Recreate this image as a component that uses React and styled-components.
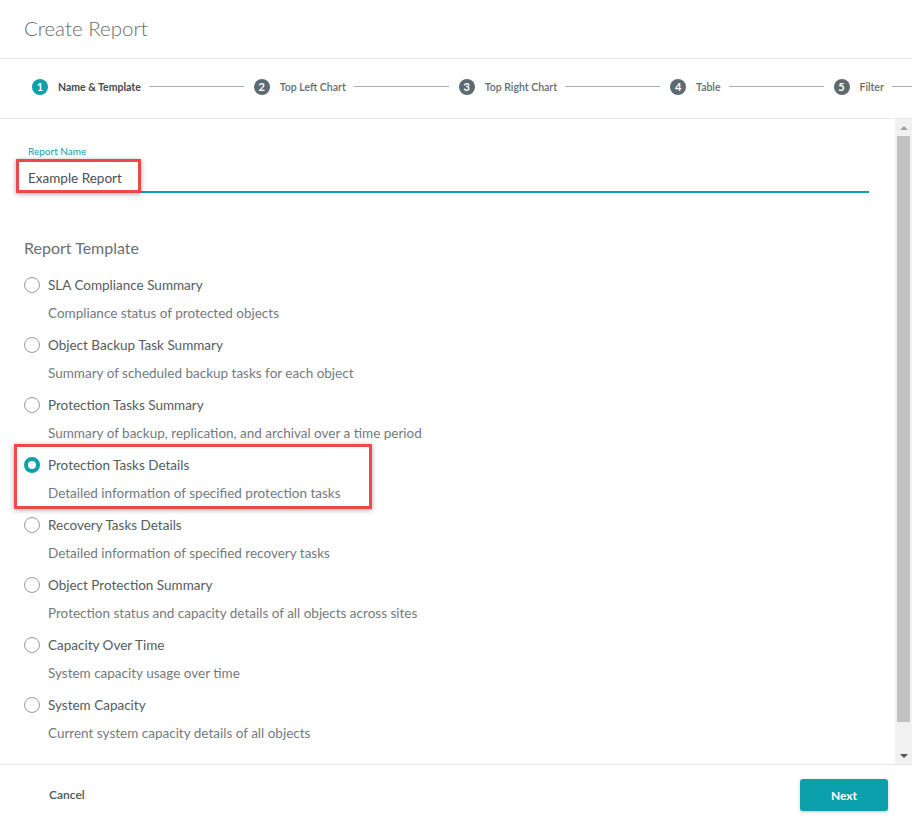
import styled, { createGlobalStyle } from "styled-components";

const GlobalStyle = createGlobalStyle`
  html, body {
    margin: 0;
    padding: 0;
    background: #ffffff;
    font-family: Lato, "Open Sans", sans-serif;
  }
  * {
    box-sizing: border-box;
  }
`;

const teal = "#0ba0ab";

const Dialog = styled.div`
  width: 912px;
  height: 825px;
  display: flex;
  flex-direction: column;
  background: #fff;
  overflow: hidden;
`;

const Header = styled.div`
  height: 59px;
  padding: 0 24px 2px;
  display: flex;
  align-items: center;
  border-bottom: 1px solid #e8e8e8;
  font-size: 20.5px;
  font-weight: 300;
  color: #6b6b6b;
`;

const Stepper = styled.div`
  height: 60px;
  flex-shrink: 0;
  padding: 0 0 4px 32px;
  display: flex;
  align-items: center;
  border-bottom: 1px solid #e8e8e8;
  overflow: hidden;
  white-space: nowrap;
`;

const Step = styled.div`
  display: flex;
  align-items: center;
  flex-shrink: 0;
`;

const StepNum = styled.span`
  width: 16px;
  height: 16px;
  border-radius: 50%;
  background: ${(p) => (p.$active ? teal : "#5d6a6f")};
  color: #fff;
  font-size: 11px;
  font-weight: 700;
  display: flex;
  align-items: center;
  justify-content: center;
`;

const StepLabel = styled.span`
  margin-left: 10px;
  font-size: 10.5px;
  font-weight: ${(p) => (p.$active ? 700 : 600)};
  color: ${(p) => (p.$active ? "#3f4a50" : "#626c70")};
`;

const StepLine = styled.span`
  width: 95px;
  height: 1px;
  background: #a8adb0;
  margin: 0 10px 0 8px;
`;

const Body = styled.div`
  flex: 1;
  min-height: 0;
  display: flex;
`;

const Content = styled.div`
  flex: 1;
  min-width: 0;
  overflow: hidden;
  padding: 26px 26px 0 24px;
`;

const ScrollBar = styled.div`
  width: 17px;
  flex-shrink: 0;
  background: #f1f1f1;
  display: flex;
  flex-direction: column;
  align-items: center;
`;

const ScrollArrow = styled.div`
  height: 17px;
  width: 100%;
  display: flex;
  align-items: center;
  justify-content: center;
  &::before {
    content: "";
    border-left: 4px solid transparent;
    border-right: 4px solid transparent;
    ${(p) => (p.$down ? "border-top: 4px solid #505050;" : "border-bottom: 4px solid #a3a3a3;")}
  }
`;

const ScrollTrack = styled.div`
  flex: 1;
  width: 100%;
  padding: 0 2px 25px;
  display: flex;
`;

const ScrollThumb = styled.div`
  flex: 1;
  background: #c1c1c1;
`;

const FieldLabel = styled.div`
  font-size: 10px;
  color: ${teal};
  margin-left: 4px;
`;

const InputWrap = styled.div`
  position: relative;
  margin-top: 8px;
  border-bottom: 2px solid ${teal};
  padding: 2px 0 2px 4px;
`;

const TextInput = styled.div`
  font-size: 13.5px;
  color: #4a4f52;
  line-height: 22px;
`;

const Highlight = styled.div`
  position: absolute;
  border: 3px solid #f0474a;
  box-shadow: 0 1px 5px rgba(0, 0, 0, 0.35);
  pointer-events: none;
`;

const SectionTitle = styled.div`
  margin-top: 45px;
  font-size: 16px;
  color: #6a7073;
`;

const Options = styled.div`
  margin-top: 18px;
  display: flex;
  flex-direction: column;
`;

const Option = styled.div`
  position: relative;
  height: 60px;
  display: grid;
  grid-template-columns: 24px 1fr;
  grid-template-rows: 20px 36px;
  align-items: center;
`;

const Radio = styled.span`
  width: 16px;
  height: 16px;
  border-radius: 50%;
  border: ${(p) => (p.$checked ? `4px solid ${teal}` : "1px solid #969c9f")};
  background: #fff;
`;

const OptionTitle = styled.div`
  font-size: 13.5px;
  color: #555b5e;
`;

const OptionDesc = styled.div`
  grid-column: 2;
  font-size: 13.5px;
  color: #737a7d;
`;

const Footer = styled.div`
  height: 61px;
  flex-shrink: 0;
  border-top: 1px solid #e6e6e6;
  display: flex;
  align-items: center;
  justify-content: space-between;
  padding: 0 24px 0 49px;
`;

const CancelButton = styled.button`
  border: none;
  background: none;
  padding: 0 0 2px;
  font-family: inherit;
  font-size: 12px;
  font-weight: 600;
  color: #4c5356;
`;

const NextButton = styled.button`
  width: 88px;
  height: 32px;
  border: none;
  border-radius: 3px;
  background: ${teal};
  color: #fff;
  font-family: inherit;
  font-size: 12px;
  font-weight: 700;
  box-shadow: 0 1px 3px rgba(0, 0, 0, 0.25);
`;

const steps = ["Name & Template", "Top Left Chart", "Top Right Chart", "Table", "Filter"];

const templates = [
  ["SLA Compliance Summary", "Compliance status of protected objects"],
  ["Object Backup Task Summary", "Summary of scheduled backup tasks for each object"],
  ["Protection Tasks Summary", "Summary of backup, replication, and archival over a time period"],
  ["Protection Tasks Details", "Detailed information of specified protection tasks"],
  ["Recovery Tasks Details", "Detailed information of specified recovery tasks"],
  ["Object Protection Summary", "Protection status and capacity details of all objects across sites"],
  ["Capacity Over Time", "System capacity usage over time"],
  ["System Capacity", "Current system capacity details of all objects"],
];

export default function App() {
  const selected = 3;
  return (
    <Dialog>
      <GlobalStyle />
      <Header>Create Report</Header>
      <Stepper>
        {steps.map((s, i) => (
          <Step key={s}>
            <StepNum $active={i === 0}>{i + 1}</StepNum>
            <StepLabel $active={i === 0}>{s}</StepLabel>
            <StepLine />
          </Step>
        ))}
      </Stepper>
      <Body>
        <Content>
          <FieldLabel>Report Name</FieldLabel>
          <InputWrap>
            <TextInput>Example Report</TextInput>
            <Highlight style={{ left: -8, top: -6, width: 125, height: 34 }} />
          </InputWrap>
          <SectionTitle>Report Template</SectionTitle>
          <Options>
            {templates.map(([title, desc], i) => (
              <Option key={title}>
                <Radio $checked={i === selected} />
                <OptionTitle>{title}</OptionTitle>
                <OptionDesc>{desc}</OptionDesc>
                {i === selected && (
                  <Highlight style={{ left: -10, top: -11, width: 358, height: 65 }} />
                )}
              </Option>
            ))}
          </Options>
        </Content>
        <ScrollBar>
          <ScrollArrow />
          <ScrollTrack>
            <ScrollThumb />
          </ScrollTrack>
          <ScrollArrow $down />
        </ScrollBar>
      </Body>
      <Footer>
        <CancelButton>Cancel</CancelButton>
        <NextButton>Next</NextButton>
      </Footer>
    </Dialog>
  );
}
